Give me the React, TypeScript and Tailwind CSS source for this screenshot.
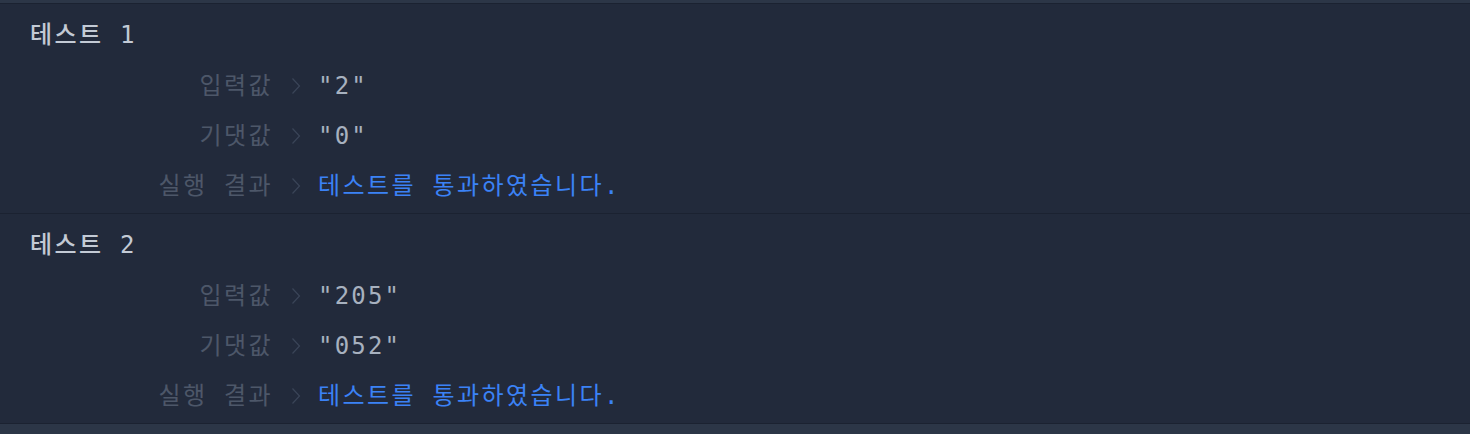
const tests = [
  { name: '테스트 1', input: '"2"', expected: '"0"', result: '테스트를 통과하였습니다.' },
  { name: '테스트 2', input: '"205"', expected: '"052"', result: '테스트를 통과하였습니다.' },
];

// hangul and latin get different spacing so both land on the grid of the original
function Txt({ s }: { s: string }) {
  const parts = s.split(/([\uac00-\ud7a3]+)/).filter(Boolean);
  return (
    <span className="whitespace-pre">
      {parts.map((p, i) =>
        /[\uac00-\ud7a3]/.test(p) ? (
          <span key={i} className="tracking-[2.4px]">{p}</span>
        ) : (
          <span key={i} className="tracking-[2.2px]">{p}</span>
        )
      )}
    </span>
  );
}

function Chevron() {
  return (
    <svg viewBox="0 0 10 16" className="w-[10px] h-[16px] shrink-0" fill="none">
      <path d="M1.5 0.5 L8.5 8 L1.5 15.5" stroke="#3b4558" strokeWidth="1.2" />
    </svg>
  );
}

function Row({ label, value, pass }: { label: string; value: string; pass?: boolean }) {
  return (
    <div className="flex items-center h-[50px]">
      <div className="w-[273px] text-right text-[#4d5769]">
        <Txt s={label} />
      </div>
      <div className="ml-[18px]">
        <Chevron />
      </div>
      <div className={'ml-[17px] ' + (pass ? 'text-[#3b82f6]' : 'font-medium text-[#a7b1bf]')}>
        <Txt s={value} />
      </div>
    </div>
  );
}

export default function App() {
  return (
    <div
      className="w-[1470px] h-[434px] bg-[#222a3b] text-[24px] overflow-hidden"
      style={{ fontFamily: '"DejaVu Sans Mono", "Noto Sans CJK KR", monospace' }}
    >
      <div className="h-[4px] bg-[#2c3647] border-b border-[#1b2231]" />
      {tests.map((t) => (
        <div key={t.name} className="pb-[2px] border-b border-[#1b2231]">
          <div className="h-[57px] pt-[4px] flex items-center pl-[30px] font-medium text-[#c3cad5]">
            <Txt s={t.name} />
          </div>
          <Row label="입력값" value={t.input} />
          <Row label="기댓값" value={t.expected} />
          <Row label="실행 결과" value={t.result} pass />
        </div>
      ))}
      <div className="h-[20px] bg-[#2c3647]" />
    </div>
  );
}
